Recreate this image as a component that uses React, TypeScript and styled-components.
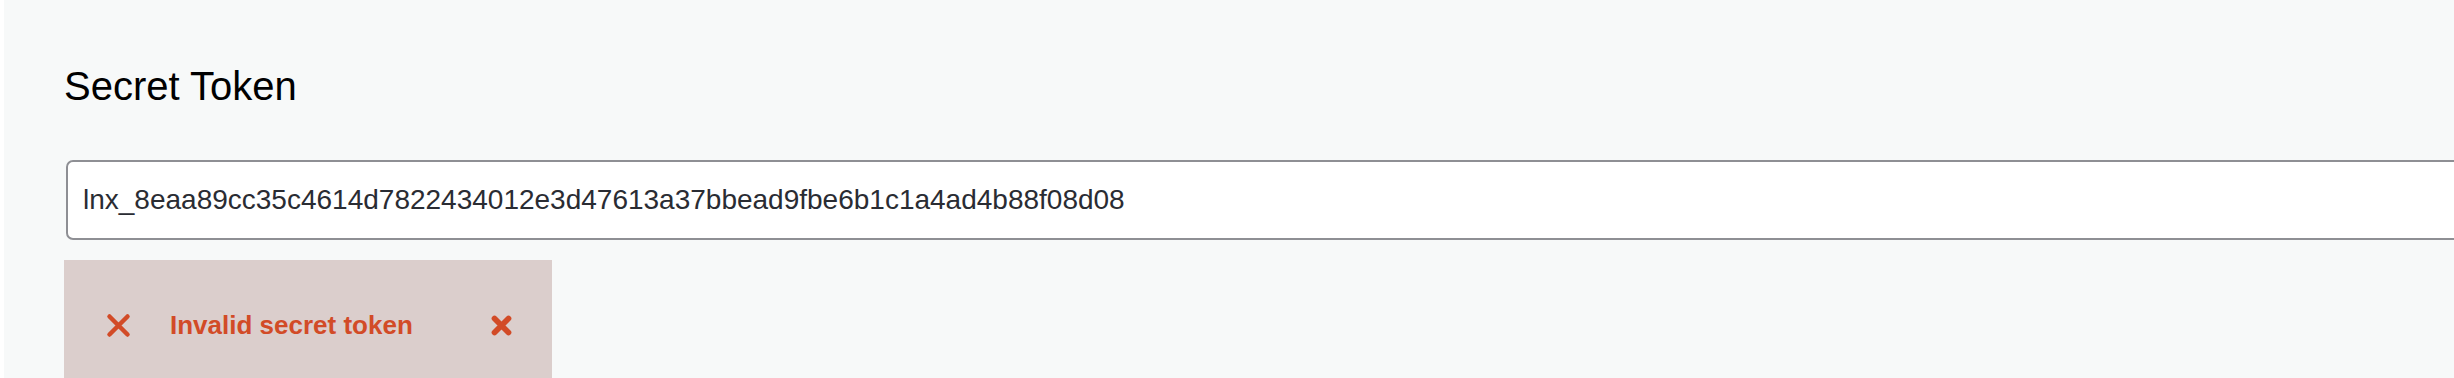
import styled, { createGlobalStyle } from 'styled-components'

const GlobalStyle = createGlobalStyle`
  html, body {
    margin: 0;
    padding: 0;
    background-color: #ffffff;
    overflow: hidden;
  }
`

const Page = styled.main`
  margin-left: 4px;
  min-height: 378px;
  background-color: #f7f9f9;
  padding: 62px 0 0 60px;
  box-sizing: border-box;
  font-family: 'Liberation Sans', Arial, sans-serif;
`

const Title = styled.h2`
  margin: 0 0 50px;
  font-size: 40px;
  font-weight: 400;
  line-height: 1.2;
  color: #000;
`

const TokenInput = styled.input`
  display: block;
  box-sizing: border-box;
  width: calc(100% + 40px);
  height: 80px;
  margin: 0 0 0 2px;
  padding: 0 15px;
  border: 2px solid #8e8f94;
  border-radius: 7px;
  background-color: #ffffff;
  font-family: 'Liberation Sans', Arial, sans-serif;
  font-size: 28px;
  color: #2a2c33;
  outline: none;
`

const Alert = styled.div`
  display: flex;
  align-items: center;
  box-sizing: border-box;
  width: 488px;
  height: 124px;
  margin-top: 20px;
  padding: 6px 40px 0 41px;
  background-color: #dbcecc;
  color: #d24b27;
`

const AlertText = styled.span`
  flex: 1;
  margin-left: 38px;
  font-size: 26px;
  font-weight: 700;
`

const IconBox = styled.span<{ $size: number }>`
  display: inline-flex;
  width: ${(p) => p.$size}px;
  height: ${(p) => p.$size}px;
`

function Cross({ size, weight }: { size: number; weight: number }) {
  return (
    <IconBox $size={size}>
      <svg width={size} height={size} viewBox="0 0 24 24" fill="none">
        <path
          d="M4 4L20 20M20 4L4 20"
          stroke="currentColor"
          strokeWidth={weight}
          strokeLinecap="round"
        />
      </svg>
    </IconBox>
  )
}

export default function App() {
  return (
    <>
      <GlobalStyle />
      <Page>
        <Title>Secret Token</Title>
        <TokenInput
          readOnly
          value="lnx_8eaa89cc35c4614d7822434012e3d47613a37bbead9fbe6b1c1a4ad4b88f08d08"
        />
        <Alert role="alert">
          <Cross size={27} weight={4} />
          <AlertText>Invalid secret token</AlertText>
          <Cross size={21} weight={6.5} />
        </Alert>
      </Page>
    </>
  )
}
